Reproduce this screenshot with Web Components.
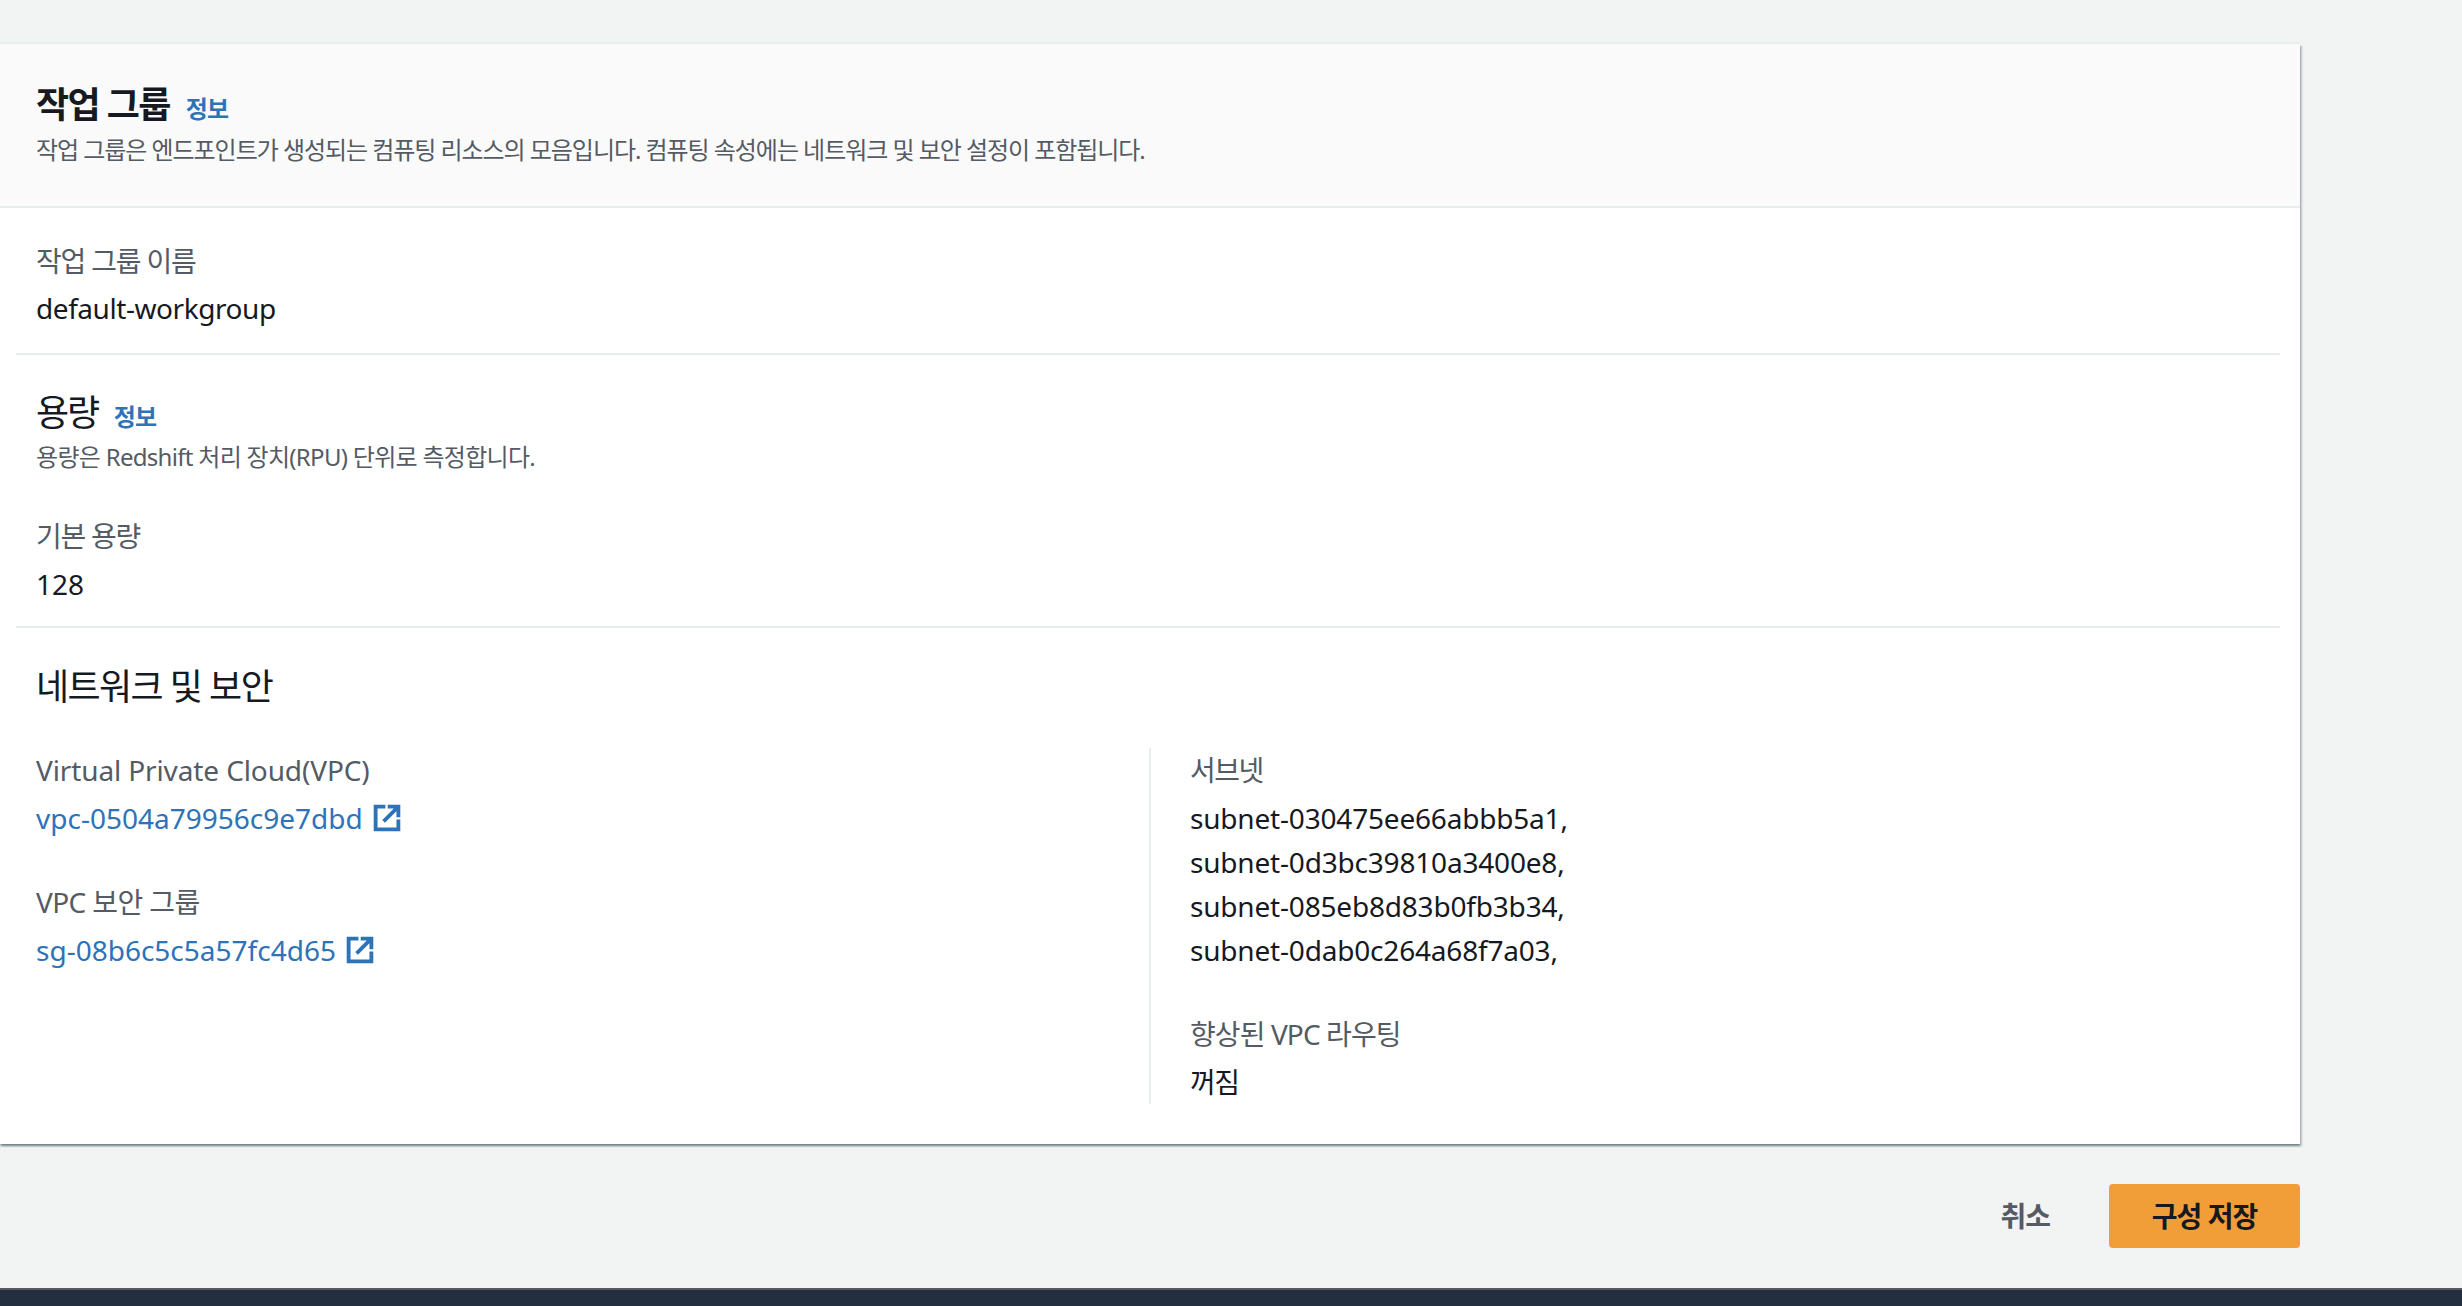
<!DOCTYPE html>
<html lang="ko">
<head>
<meta charset="utf-8">
<title>작업 그룹</title>
<style>
    html, body { margin: 0; height: 100%; }
    body {
        background: #f2f3f3;
        color: #16191f;
        font-family: "Noto Sans", "Noto Sans CJK KR", sans-serif;
        font-size: 28px;
        line-height: 44px;
    }
</style>
</head>
<body>
<wg-page>
    <wg-card>
        <wg-heading slot="header" level="1" info="정보" style="--title-ls: -1.6px; --desc-ls: -1.05px" desc="작업 그룹은 엔드포인트가 생성되는 컴퓨팅 리소스의 모음입니다. 컴퓨팅 속성에는 네트워크 및 보안 설정이 포함됩니다.">작업 그룹</wg-heading>

        <wg-section top="31" bottom="23">
            <wg-field label="작업 그룹 이름" gap="3" style="--label-ls: -1.2px; letter-spacing: -.44px">default-workgroup</wg-field>
        </wg-section>

        <wg-section top="36" bottom="20">
            <wg-heading info="정보" style="--title-ls: -2.2px; --desc-ls: -.7px" desc="용량은 Redshift 처리 장치(RPU) 단위로 측정합니다.">용량</wg-heading>
            <wg-field label="기본 용량" style="margin-top: 35px; --label-ls: -1.25px">128</wg-field>
        </wg-section>

        <wg-section top="37" last>
            <wg-heading style="--title-ls: -1.6px">네트워크 및 보안</wg-heading>
            <wg-columns>
                <div slot="left">
                    <wg-field label="Virtual Private Cloud(VPC)" style="--label-ls: -.12px"><wg-link>vpc-0504a79956c9e7dbd</wg-link></wg-field>
                    <wg-field label="VPC 보안 그룹" style="margin-top: 40px; --label-ls: -.6px"><wg-link>sg-08b6c5c5a57fc4d65</wg-link></wg-field>
                </div>
                <div slot="right">
                    <wg-field label="서브넷" style="--label-ls: -1.5px; letter-spacing: -.19px">subnet-030475ee66abbb5a1,<br>subnet-0d3bc39810a3400e8,<br>subnet-085eb8d83b0fb3b34,<br>subnet-0dab0c264a68f7a03,</wg-field>
                    <wg-field label="향상된 VPC 라우팅" style="margin-top: 40px; --label-ls: -.9px; letter-spacing: -1.5px">꺼짐</wg-field>
                </div>
            </wg-columns>
        </wg-section>
    </wg-card>
    <wg-actions>
        <wg-button>취소</wg-button>
        <wg-button primary>구성 저장</wg-button>
    </wg-actions>
    <wg-footer></wg-footer>
</wg-page>

<script>
    class WgPage extends HTMLElement {
        constructor() {
            super();
            this.attachShadow({ mode: 'open' });
            this.shadowRoot.innerHTML = `
                <style>
                    :host { display: flex; flex-direction: column; height: 1306px; padding-top: 44px; box-sizing: border-box; overflow: hidden; }
                    .main { width: 2300px; flex: 1; }
                </style>
                <div class="main"><slot></slot></div>
                <slot name="footer"></slot>
            `;
        }
    }

    class WgCard extends HTMLElement {
        constructor() {
            super();
            this.attachShadow({ mode: 'open' });
            this.shadowRoot.innerHTML = `
                <style>
                    :host {
                        display: block;
                        background: #fff;
                        box-shadow: 0 2px 2px 0 rgba(0,28,36,.4), 2px 2px 2px 0 rgba(0,28,36,.2), 0 -2px 0 0 #eaeded;
                    }
                    .header {
                        background: #fafafa;
                        border-bottom: 2px solid #eaeded;
                        padding: 39px 36px 0;
                        height: 164px;
                        box-sizing: border-box;
                    }
                </style>
                <div class="header"><slot name="header"></slot></div>
                <slot></slot>
            `;
        }
    }

    class WgHeading extends HTMLElement {
        constructor() {
            super();
            this.attachShadow({ mode: 'open' });
            const level1 = this.getAttribute('level') === '1';
            const info = this.getAttribute('info');
            const desc = this.getAttribute('desc');
            this.shadowRoot.innerHTML = `
                <style>
                    :host { display: block; }
                    .title { display: flex; align-items: baseline; gap: 16px; line-height: 44px; }
                    h2 { margin: 0; font-size: 36px; font-weight: ${level1 ? 700 : 400}; color: #16191f; letter-spacing: var(--title-ls, 0); }
                    a { font-size: 24px; font-weight: 700; color: #2e73b8; text-decoration: none; letter-spacing: -1px; }
                    p { margin: ${level1 ? -3 : -4}px 0 0; font-size: 24px; line-height: 44px; color: #545b64; letter-spacing: var(--desc-ls, 0); }
                </style>
                <div class="title">
                    <h2><slot></slot></h2>
                    ${info ? `<a href="#">${info}</a>` : ''}
                </div>
                ${desc ? `<p>${desc}</p>` : ''}
            `;
        }
    }

    class WgSection extends HTMLElement {
        constructor() {
            super();
            this.attachShadow({ mode: 'open' });
            const last = this.hasAttribute('last');
            const top = this.getAttribute('top') || 32;
            const bottom = this.getAttribute('bottom') || 40;
            this.shadowRoot.innerHTML = `
                <style>
                    :host { display: block; margin: 0 20px 0 16px; ${last ? '' : 'border-bottom: 2px solid #eaeded;'} }
                    .body { padding: ${top}px 0 ${bottom}px 20px; }
                </style>
                <div class="body"><slot></slot></div>
            `;
        }
    }

    class WgField extends HTMLElement {
        constructor() {
            super();
            this.attachShadow({ mode: 'open' });
            const gap = this.getAttribute('gap') || 4;
            this.shadowRoot.innerHTML = `
                <style>
                    :host { display: block; }
                    .label { color: #545b64; margin-bottom: ${gap}px; letter-spacing: var(--label-ls, 0); }
                    .value { color: #16191f; }
                </style>
                <div class="label">${this.getAttribute('label')}</div>
                <div class="value"><slot></slot></div>
            `;
        }
    }

    class WgColumns extends HTMLElement {
        constructor() {
            super();
            this.attachShadow({ mode: 'open' });
            this.shadowRoot.innerHTML = `
                <style>
                    :host { display: grid; grid-template-columns: 1113px 1fr; margin-top: 39px; }
                    .right { border-left: 2px solid #eaeded; padding-left: 39px; }
                </style>
                <div class="left"><slot name="left"></slot></div>
                <div class="right"><slot name="right"></slot></div>
            `;
        }
    }

    class WgLink extends HTMLElement {
        constructor() {
            super();
            this.attachShadow({ mode: 'open' });
            this.shadowRoot.innerHTML = `
                <style>
                    :host { display: inline-flex; align-items: center; gap: 10px; color: #2e73b8; }
                    svg { width: 28px; height: 28px; display: block; }
                </style>
                <slot></slot>
                <svg viewBox="0 0 16 16" fill="none" stroke="currentColor" stroke-width="2.2" stroke-linecap="square">
                    <path d="M9.5 1.5H14.5V6.5M14 2L6.8 9.2M6 1.5H1.5V14.5H14.5V10"/>
                </svg>
            `;
        }
    }

    class WgActions extends HTMLElement {
        constructor() {
            super();
            this.attachShadow({ mode: 'open' });
            this.shadowRoot.innerHTML = `
                <style>
                    :host { display: flex; justify-content: flex-end; align-items: center; gap: 19px; padding-top: 40px; }
                </style>
                <slot></slot>
            `;
        }
    }

    class WgButton extends HTMLElement {
        constructor() {
            super();
            this.attachShadow({ mode: 'open' });
            const primary = this.hasAttribute('primary');
            this.shadowRoot.innerHTML = `
                <style>
                    :host { display: block; }
                    button {
                        font: inherit;
                        font-weight: 700;
                        letter-spacing: -1px;
                        height: 64px;
                        ${primary ? 'width: 191px;' : 'padding: 0 40px;'}
                        border: 0;
                        border-radius: 4px;
                        background: ${primary ? '#f29e38' : 'transparent'};
                        color: ${primary ? '#16191f' : '#545b64'};
                    }
                </style>
                <button><slot></slot></button>
            `;
        }
    }

    class WgFooter extends HTMLElement {
        constructor() {
            super();
            this.attachShadow({ mode: 'open' });
            this.shadowRoot.innerHTML = `
                <style>
                    :host { display: block; height: 16px; background: #232f3e; border-top: 2px solid #545b64; }
                </style>
            `;
            this.slot = 'footer';
        }
    }

    customElements.define('wg-page', WgPage);
    customElements.define('wg-card', WgCard);
    customElements.define('wg-heading', WgHeading);
    customElements.define('wg-section', WgSection);
    customElements.define('wg-field', WgField);
    customElements.define('wg-columns', WgColumns);
    customElements.define('wg-link', WgLink);
    customElements.define('wg-actions', WgActions);
    customElements.define('wg-button', WgButton);
    customElements.define('wg-footer', WgFooter);
</script>
</body>
</html>
